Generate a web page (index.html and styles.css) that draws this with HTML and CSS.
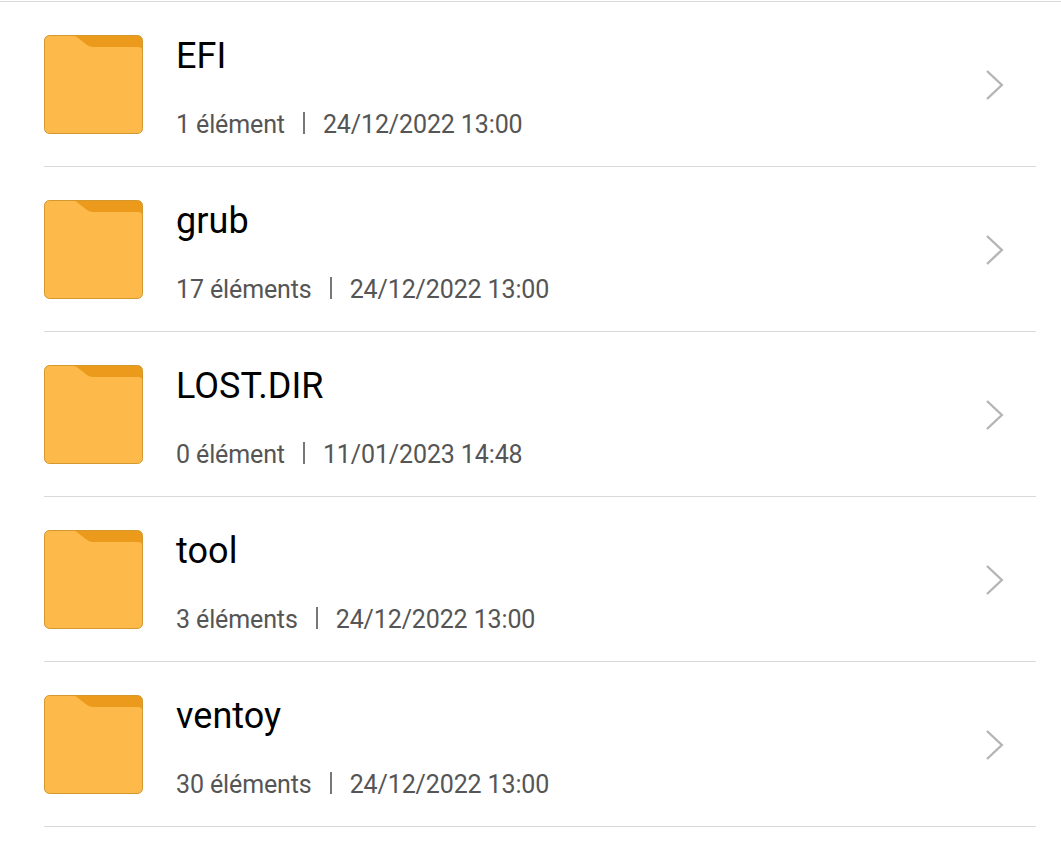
FILE: index.html
```html
<!DOCTYPE html>
<html lang="fr">
<head>
  <meta charset="UTF-8">
  <meta name="viewport" content="width=device-width, initial-scale=1.0">
  <title>Fichiers</title>
  <link rel="stylesheet" href="styles.css">
</head>
<body>
  <svg class="defs">
    <symbol id="folder" viewBox="0 0 99 99">
      <rect x="0.5" y="0.5" width="98" height="98" rx="5" fill="#eb9a1c" stroke="#d3992f"/>
      <path d="M1 6Q1 1 6 1H30Q32 1 34 3L43 10Q46 12 49 12H94Q98 12 98 15V93Q98 98 93 98H6Q1 98 1 93Z" fill="#fdba4a"/>
    </symbol>
    <symbol id="arrow" viewBox="0 0 18 30">
      <path d="M1 1L15.8 15L1 29" fill="none" stroke="#b5b5b5" stroke-width="2.4"/>
    </symbol>
  </svg>
  <ul class="list">
    <li class="row">
      <svg class="folder"><use href="#folder"/></svg>
      <div class="info">
        <div class="name">EFI</div>
        <div class="details"><span>1 élément</span><i class="bar"></i><span>24/12/2022 13:00</span></div>
      </div>
      <svg class="arrow"><use href="#arrow"/></svg>
    </li>
    <li class="row">
      <svg class="folder"><use href="#folder"/></svg>
      <div class="info">
        <div class="name">grub</div>
        <div class="details"><span>17 éléments</span><i class="bar"></i><span>24/12/2022 13:00</span></div>
      </div>
      <svg class="arrow"><use href="#arrow"/></svg>
    </li>
    <li class="row">
      <svg class="folder"><use href="#folder"/></svg>
      <div class="info">
        <div class="name">LOST.DIR</div>
        <div class="details"><span>0 élément</span><i class="bar"></i><span>11/01/2023 14:48</span></div>
      </div>
      <svg class="arrow"><use href="#arrow"/></svg>
    </li>
    <li class="row">
      <svg class="folder"><use href="#folder"/></svg>
      <div class="info">
        <div class="name">tool</div>
        <div class="details"><span>3 éléments</span><i class="bar"></i><span>24/12/2022 13:00</span></div>
      </div>
      <svg class="arrow"><use href="#arrow"/></svg>
    </li>
    <li class="row">
      <svg class="folder"><use href="#folder"/></svg>
      <div class="info">
        <div class="name">ventoy</div>
        <div class="details"><span>30 éléments</span><i class="bar"></i><span>24/12/2022 13:00</span></div>
      </div>
      <svg class="arrow"><use href="#arrow"/></svg>
    </li>
  </ul>
</body>
</html>
```
FILE: styles.css
```css
*{
  box-sizing: border-box;
}
body{
  margin: 0;
  padding-top: 1px;
  background: #fff;
  font-family: Roboto, sans-serif;
}
.defs{
  display: none;
}
.list{
  margin: 0;
  padding: 0 25px 0 44px;
  list-style: none;
  border-top: 1px solid #d9d9d9;
}
.row{
  display: flex;
  align-items: flex-start;
  height: 165px;
  padding-top: 33px;
  border-bottom: 1px solid #d9d9d9;
}
.folder{
  width: 99px;
  height: 99px;
}
.info{
  flex: 1;
  margin-left: 33px;
}
.name{
  font-size: 36px;
  line-height: 42px;
  letter-spacing: 0.05px;
  color: #000;
}
.details{
  display: flex;
  align-items: flex-start;
  margin-top: 33px;
  font-size: 25px;
  line-height: 30px;
  letter-spacing: -0.12px;
  color: #555;
}
.bar{
  width: 2px;
  height: 22px;
  margin: 2px 18px 0 18px;
  background: #777;
}
.arrow{
  width: 18px;
  height: 30px;
  margin: 35px 32px 0 0;
}
```
